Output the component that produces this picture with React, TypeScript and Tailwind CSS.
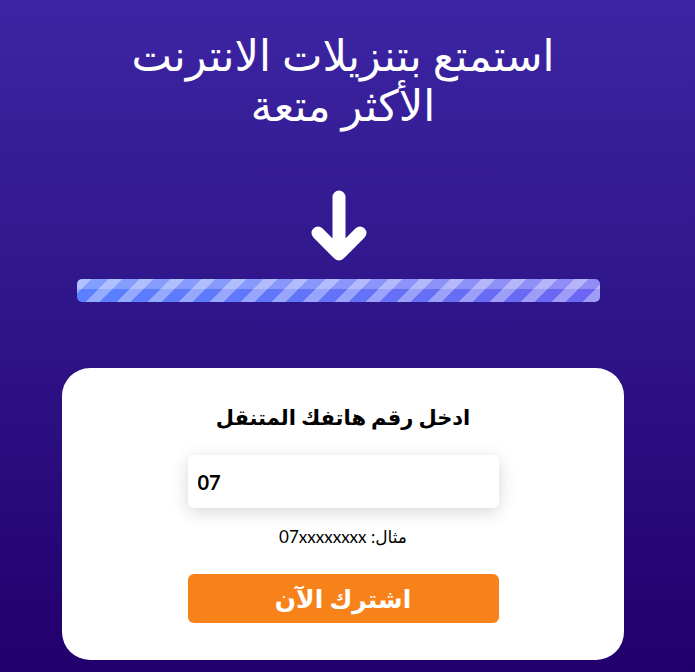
import React from 'react'

function DownArrow() {
  return (
    <svg width="60" height="76" viewBox="0 0 60 76" className="block">
      <path
        d="M30 7 V64 M9 43 L30 64 L51 43"
        fill="none"
        stroke="#ffffff"
        strokeWidth="13"
        strokeLinecap="round"
        strokeLinejoin="round"
      />
    </svg>
  )
}

export default function App() {
  return (
    <div className="min-h-[672px] w-full bg-gradient-to-b from-[#3c25a4] to-[#22006c] pl-[62px] pr-[71px] pt-[30px] font-['Lato','DejaVu_Sans',sans-serif]">
      <div className="flex w-[562px] flex-col items-center">
        <h1
          dir="rtl"
          className="text-center text-[43px] font-normal leading-[50px] text-white"
        >
          استمتع بتنزيلات الانترنت
          <br />
          الأكثر متعة
        </h1>

        <div className="mr-[8px] mt-[60px]">
          <DownArrow />
        </div>

        <div className="ml-[15px] mt-[13px] h-[23px] w-[523px] self-start rounded-[5px] bg-[image:linear-gradient(to_bottom,rgba(255,255,255,0.25)_0_45%,transparent_45%),repeating-linear-gradient(135deg,rgba(255,255,255,0.35)_0_10px,transparent_10px_22px),linear-gradient(to_right,#5a80ff,#6c66f2)]" />

        <div
          dir="rtl"
          className="mt-[66px] flex h-[292px] w-[562px] flex-col items-center rounded-[28px] bg-white pt-[34px]"
        >
          <h2 className="text-[21px] font-bold leading-[30px] text-black">
            ادخل رقم هاتفك المتنقل
          </h2>

          <input
            dir="ltr"
            type="tel"
            defaultValue="07"
            className="mt-[23px] h-[53px] w-[311px] rounded-md bg-white px-[10px] text-left text-[20px] font-bold text-black shadow-[0_4px_18px_rgba(0,0,0,0.16)] outline-none"
          />

          <p className="mt-[17px] text-[17px] leading-[24px] text-black">
            مثال: 07xxxxxxxx
          </p>

          <button className="mt-[25px] h-[49px] w-[311px] rounded-md bg-[#f8821a] text-[25px] font-bold leading-none text-white">
            اشترك الآن
          </button>
        </div>
      </div>
    </div>
  )
}
